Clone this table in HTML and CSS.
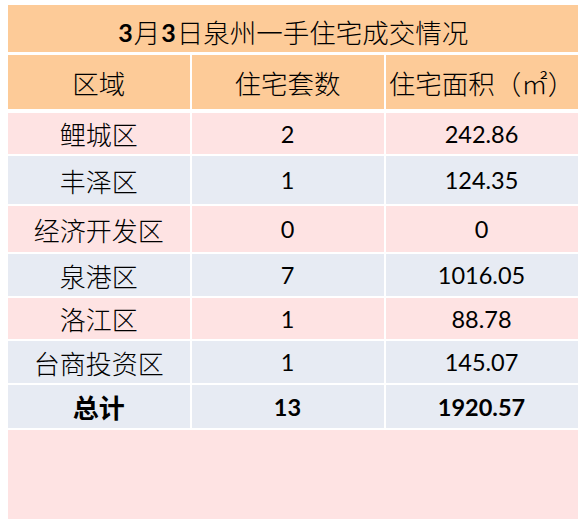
FILE: index.html
```html
<!DOCTYPE html>
<html lang="zh-CN">
<head>
<meta charset="utf-8">
<title>3月3日泉州一手住宅成交情况</title>
<link rel="stylesheet" href="styles.css">
</head>
<body>
<div class="sheet">
  <div class="cell title"><span class="num">3</span>月<span class="num">3</span>日泉州一手住宅成交情况</div>

  <div class="cell head">区域</div>
  <div class="cell head">住宅套数</div>
  <div class="cell head">住宅面积（㎡）</div>

  <div class="cell pink zh">鲤城区</div>
  <div class="cell pink num">2</div>
  <div class="cell pink num">242.86</div>

  <div class="cell blue zh">丰泽区</div>
  <div class="cell blue num">1</div>
  <div class="cell blue num">124.35</div>

  <div class="cell pink zh">经济开发区</div>
  <div class="cell pink num">0</div>
  <div class="cell pink num">0</div>

  <div class="cell blue zh">泉港区</div>
  <div class="cell blue num">7</div>
  <div class="cell blue num">1016.05</div>

  <div class="cell pink zh">洛江区</div>
  <div class="cell pink num">1</div>
  <div class="cell pink num">88.78</div>

  <div class="cell blue zh">台商投资区</div>
  <div class="cell blue num">1</div>
  <div class="cell blue num">145.07</div>

  <div class="cell blue zh total">总计</div>
  <div class="cell blue num total">13</div>
  <div class="cell blue num total">1920.57</div>

  <div class="cell pink filler"></div>
</div>
</body>
</html>
```

FILE: styles.css
```css
html, body {
  margin: 0;
  padding: 0;
  background: #ffffff;
}

body {
  font-family: "Noto Sans CJK SC", "Noto Sans", sans-serif;
  color: #000000;
}

.sheet {
  margin: 5px 8px 0 8px;
  width: 570px;
  display: grid;
  grid-template-columns: 181.5px 192px 192px;
  grid-template-rows: 48px 56px 41px 48px 46px 42px 41px 42px 43px 89px;
  column-gap: 2px;
  row-gap: 2px;
  background: #ffffff;
}

.cell {
  display: flex;
  align-items: center;
  justify-content: center;
  white-space: nowrap;
  overflow: visible;
}

.title {
  grid-column: 1 / 4;
  background: #fdcb98;
  font-size: 26.5px;
  font-weight: 300;
  padding-top: 6px;
  margin-bottom: 1px;
}

.title .num {
  font-family: "Lato", "Liberation Sans", sans-serif;
  font-weight: 700;
  font-size: 25px;
  padding: 0 1px;
}

.head {
  background: #fdcb98;
  font-size: 26.5px;
  font-weight: 300;
  margin-bottom: 2px;
}

.pink { background: #fee3e3; }
.blue { background: #e7ebf3; }

.zh {
  font-size: 26px;
  font-weight: 300;
}

.num {
  font-family: "Lato", "Liberation Sans", sans-serif;
  font-size: 23.5px;
}

.total { font-weight: 700; }

.filler {
  grid-column: 1 / 4;
}
```
